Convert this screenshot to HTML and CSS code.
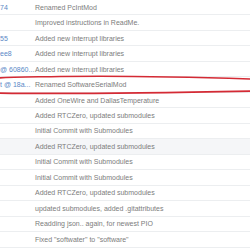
FILE: index.html
```html
<!DOCTYPE html>
<html lang="en">
<head>
  <meta charset="UTF-8">
  <meta name="viewport" content="width=device-width, initial-scale=1.0">
  <title>Commits</title>
  <link rel="stylesheet" href="styles.css">
</head>
<body>
  <div class="files">
    <div class="row"><span class="sha">74</span><span class="msg">Renamed PcIntMod</span></div>
    <div class="row"><span class="sha"></span><span class="msg">Improved instructions in ReadMe.</span></div>
    <div class="row"><span class="sha">55</span><span class="msg">Added new interrupt libraries</span></div>
    <div class="row"><span class="sha">ee8</span><span class="msg">Added new interrupt libraries</span></div>
    <div class="row"><span class="sha">@ 60860...</span><span class="msg">Added new interrupt libraries</span></div>
    <div class="row"><span class="sha">t @ 18a...</span><span class="msg">Renamed SoftwareSerialMod</span></div>
    <div class="row"><span class="sha"></span><span class="msg">Added OneWire and DallasTemperature</span></div>
    <div class="row"><span class="sha"></span><span class="msg">Added RTCZero, updated submodules</span></div>
    <div class="row"><span class="sha"></span><span class="msg">Initial Commit with Submodules</span></div>
    <div class="row hover"><span class="sha"></span><span class="msg">Added RTCZero, updated submodules</span></div>
    <div class="row"><span class="sha"></span><span class="msg">Initial Commit with Submodules</span></div>
    <div class="row"><span class="sha"></span><span class="msg">Initial Commit with Submodules</span></div>
    <div class="row"><span class="sha"></span><span class="msg">Added RTCZero, updated submodules</span></div>
    <div class="row"><span class="sha"></span><span class="msg">updated submodules, added .gitattributes</span></div>
    <div class="row"><span class="sha"></span><span class="msg">Readding json.. again, for newest PIO</span></div>
    <div class="row"><span class="sha"></span><span class="msg">Fixed "softwater" to "software"</span></div>
  </div>

  <!-- hand-drawn red loop around the highlighted commit -->
  <svg class="mark" width="250" height="250" viewBox="0 0 250 250">
    <path d="M252,79 C190,77 120,75.5 60,76.5 C30,77 8,77 -2,78" fill="none" stroke="#d42a34" stroke-width="1.6"/>
    <path d="M-2,93 C60,94 150,93 252,91" fill="none" stroke="#d42a34" stroke-width="1.8"/>
  </svg>
</body>
</html>
```

FILE: styles.css
```css
body {
  margin: 0;
  background: #fff;
  font-family: "Liberation Sans", Arial, sans-serif;
  font-size: 7px;
  overflow: hidden;
}
.files {
  width: 250px;
}
.row {
  display: flex;
  align-items: center;
  height: 15.47px;
  box-sizing: border-box;
  border-bottom: 1px solid #eceef0;
}
.row.hover {
  background: #f5f6f8;
}
.sha {
  width: 35px;
  flex: none;
  color: #5a88c6;
  white-space: nowrap;
  overflow: hidden;
}
.msg {
  color: #7c7c7c;
  white-space: nowrap;
}
.mark {
  position: absolute;
  left: 0;
  top: 0;
}
```
